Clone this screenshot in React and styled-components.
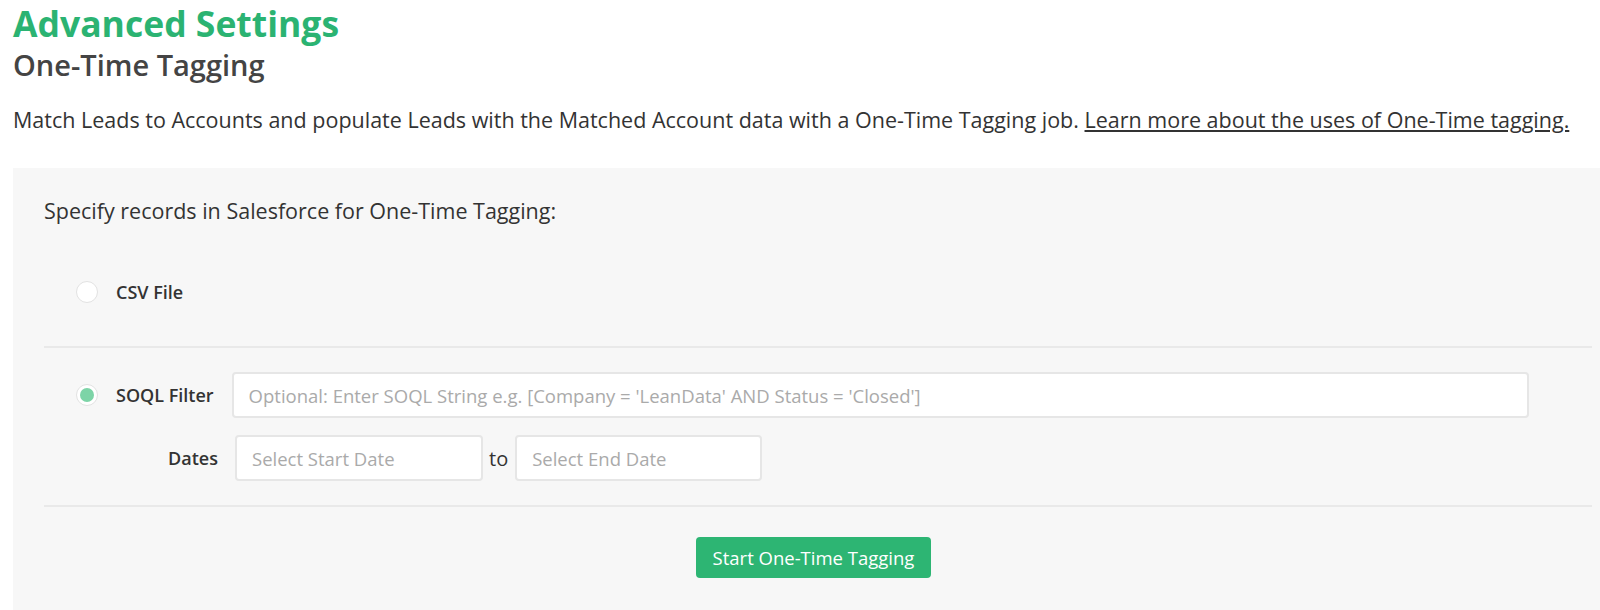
import React from 'react';
import styled, {createGlobalStyle} from 'styled-components';

const GlobalStyle = createGlobalStyle`
  body {
    margin: 0;
    background: #fff;
    font-family: "Open Sans", "Noto Sans", sans-serif;
    color: #333;
    overflow: hidden;
  }
`;

// panel runs past the right edge of the window, like in the app
const Page = styled.div`
  padding-left: 13px;
  width: 1610px;
`;

const Title = styled.h1`
  margin: 0;
  padding-top: 2px;
  font-size: 35.5px;
  line-height: 42px;
  font-weight: 700;
  color: #2bb372;
`;

const Subtitle = styled.h2`
  margin: 4px 0 0;
  font-size: 29px;
  line-height: 34px;
  font-weight: 600;
  color: #444;
`;

const Intro = styled.p`
  margin: 23px 0 0;
  font-size: 21.5px;
  line-height: 30px;
  white-space: nowrap;
`;

const Link = styled.a`
  color: #333;
  text-decoration: underline;
`;

const Panel = styled.div`
  margin-top: 33px;
  background: #f7f7f7;
  padding: 28px 31px 40px;
`;

const Prompt = styled.div`
  font-size: 21.5px;
  line-height: 30px;
`;

const Section = styled.div`
  display: flex;
  flex-direction: column;
  padding: ${props => props.pad};
  border-bottom: 2px solid #e9e9e9;
`;

const Row = styled.div`
  display: flex;
  align-items: center;
  margin-top: ${props => props.top || 0}px;
`;

const Radio = styled.span`
  box-sizing: border-box;
  width: 22px;
  height: 22px;
  margin-left: 32px;
  border-radius: 50%;
  background: #fff;
  border: 1px solid #e2e2e2;
  display: flex;
  align-items: center;
  justify-content: center;
  flex-shrink: 0;

  &::after {
    content: '';
    width: 14px;
    height: 14px;
    border-radius: 50%;
    background: ${props => (props.checked ? '#7dd4a7' : 'transparent')};
  }
`;

const Label = styled.label`
  font-size: 18px;
  font-weight: 600;
  line-height: 24px;
  color: #333;
  margin-left: ${props => props.left || 0}px;
  width: ${props => (props.width ? `${props.width}px` : 'auto')};
  text-align: ${props => (props.width ? 'right' : 'left')};
  flex-shrink: 0;
`;

const Input = styled.input`
  box-sizing: border-box;
  height: 46px;
  width: ${props => (props.width ? `${props.width}px` : 'auto')};
  flex: ${props => (props.width ? '0 0 auto' : '1')};
  margin-left: ${props => props.left || 0}px;
  margin-right: ${props => props.right || 0}px;
  padding: 0 15px;
  border: 2px solid #e6e6e6;
  border-radius: 4px;
  background: #fff;
  font-family: inherit;
  font-size: 18.5px;
  color: #333;
  outline: none;

  &::placeholder {
    color: #aaa;
  }
`;

const To = styled.span`
  font-size: 20px;
  margin: 0 7px 0 6px;
`;

const Actions = styled.div`
  display: flex;
  justify-content: center;
  padding-top: 30px;
  padding-right: 9px;
`;

const Button = styled.button`
  width: 235px;
  height: 41px;
  border: none;
  border-radius: 4px;
  background: #2db573;
  color: #fff;
  font-family: inherit;
  font-size: 18.5px;
  cursor: pointer;
`;

export default function App() {
  return (
    <Page>
      <GlobalStyle />
      <Title>Advanced Settings</Title>
      <Subtitle>One-Time Tagging</Subtitle>
      <Intro>
        Match Leads to Accounts and populate Leads with the Matched Account data with a One-Time Tagging job.{' '}
        <Link href="#">Learn more about the uses of One-Time tagging.</Link>
      </Intro>
      <Panel>
        <Prompt>Specify records in Salesforce for One-Time Tagging:</Prompt>
        <Section pad="54px 0 42px">
          <Row>
            <Radio />
            <Label left={18}>CSV File</Label>
          </Row>
        </Section>
        <Section pad="24px 0 24px">
          <Row>
            <Radio checked />
            <Label left={18}>SOQL Filter</Label>
            <Input
              left={18}
              right={63}
              placeholder="Optional: Enter SOQL String e.g. [Company = 'LeanData' AND Status = 'Closed']"
            />
          </Row>
          <Row top={17}>
            <Label width={174}>Dates</Label>
            <Input left={17} width={248} placeholder="Select Start Date" />
            <To>to</To>
            <Input width={247} placeholder="Select End Date" />
          </Row>
        </Section>
        <Actions>
          <Button>Start One-Time Tagging</Button>
        </Actions>
      </Panel>
    </Page>
  );
}
